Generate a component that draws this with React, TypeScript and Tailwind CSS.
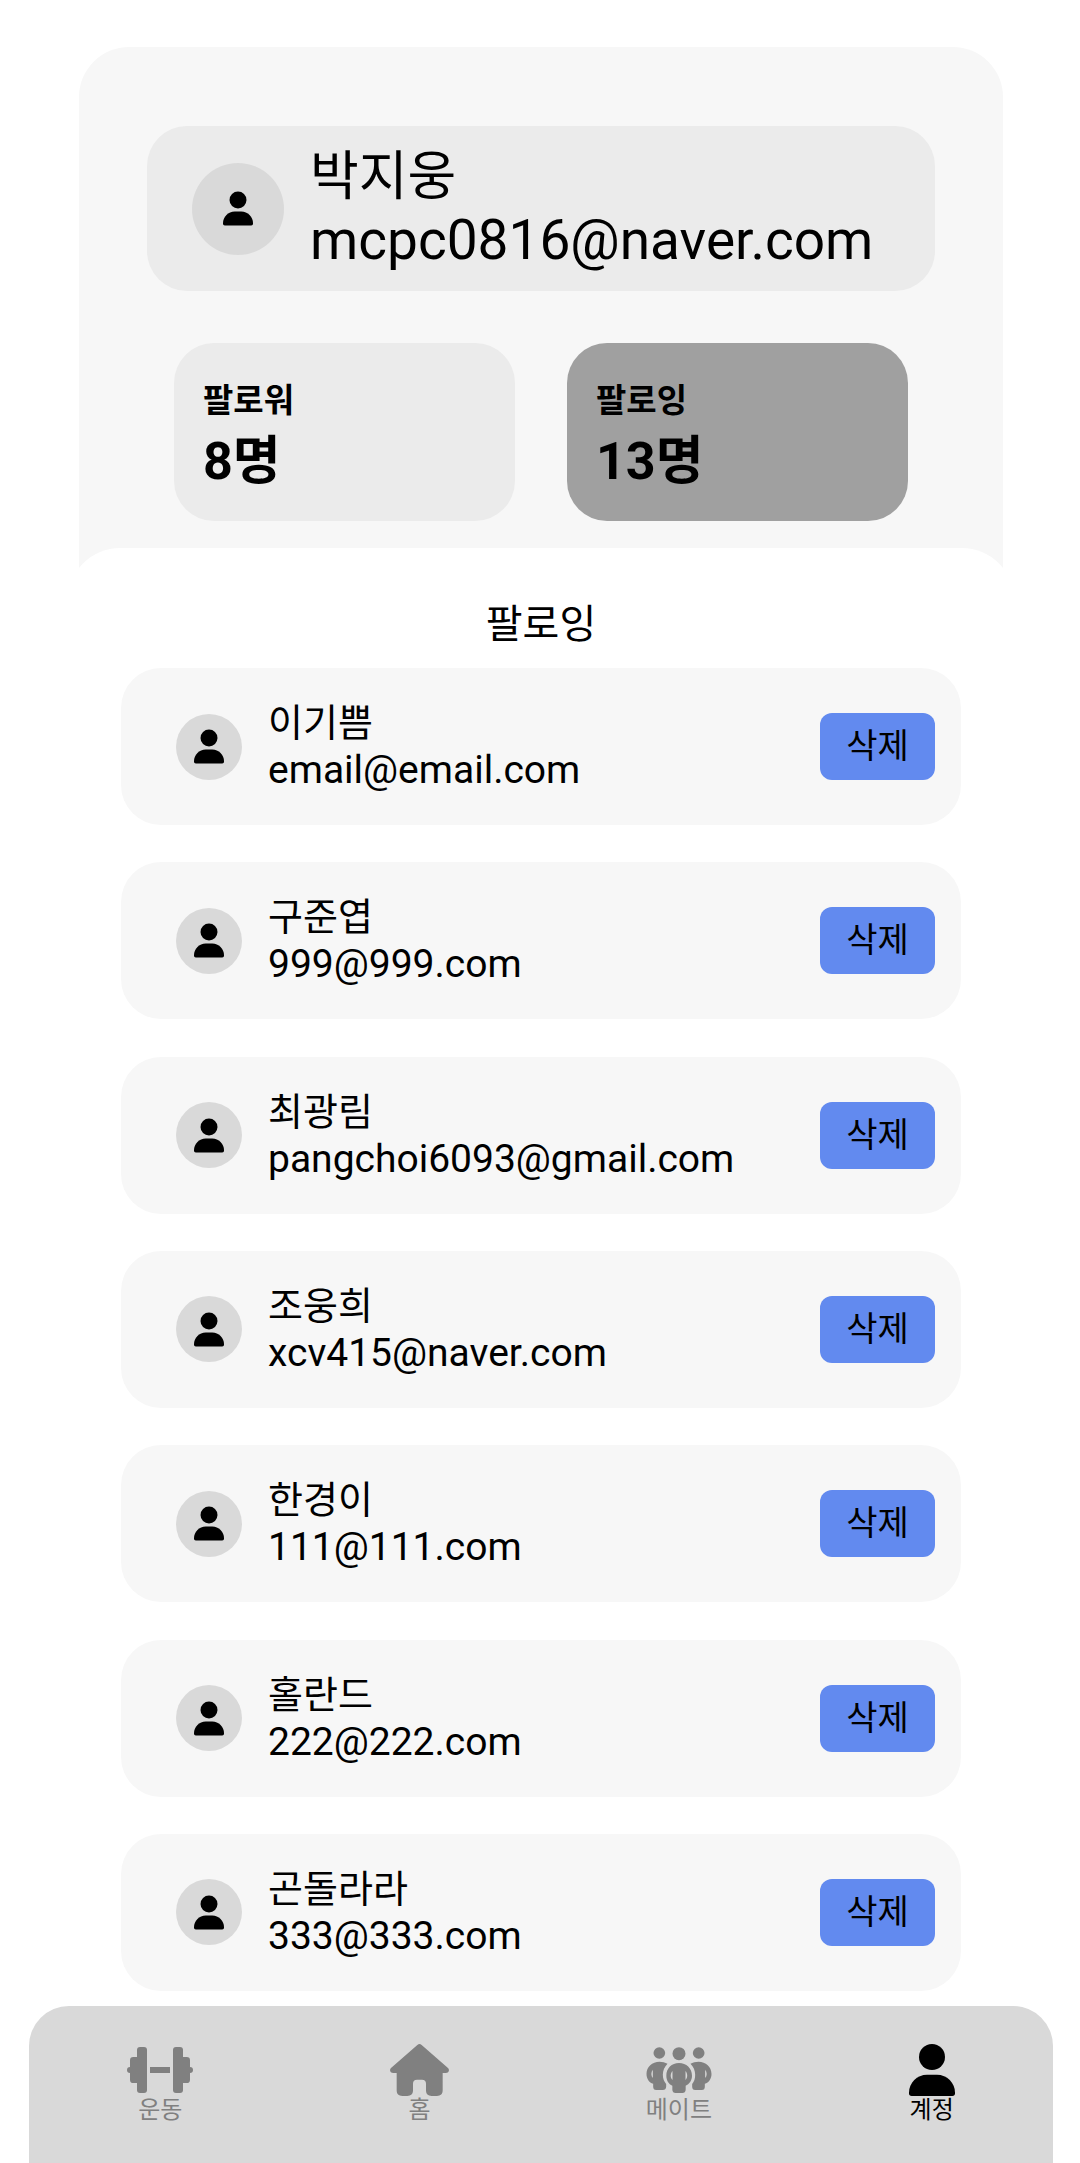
import type { ReactNode } from "react";

type Member = { name: string; email: string };

const me: Member = { name: "박지웅", email: "mcpc0816@naver.com" };

const following: Member[] = [
  { name: "이기쁨", email: "email@email.com" },
  { name: "구준엽", email: "999@999.com" },
  { name: "최광림", email: "pangchoi6093@gmail.com" },
  { name: "조웅희", email: "xcv415@naver.com" },
  { name: "한경이", email: "111@111.com" },
  { name: "홀란드", email: "222@222.com" },
  { name: "곤돌라라", email: "333@333.com" },
];

function PersonIcon({ className }: { className: string }) {
  return (
    <svg viewBox="0 0 138 156" className={className} fill="currentColor" aria-hidden="true">
      <circle cx="69" cy="39" r="39" />
      <path d="M54 92h30c30 0 54 24 54 54v2a8 8 0 0 1-8 8H8a8 8 0 0 1-8-8v-2c0-30 24-54 54-54Z" />
    </svg>
  );
}

function DumbbellIcon() {
  return (
    <svg viewBox="0 0 198 138" className="h-[46px] w-[66px]" fill="currentColor" aria-hidden="true">
      <rect x="30" y="0" width="30" height="138" rx="9" />
      <rect x="138" y="0" width="30" height="138" rx="9" />
      <path d="M36 30H19a10 10 0 0 0-10 10v20a9 9 0 0 0 0 18v20a10 10 0 0 0 10 10h17Z" />
      <path d="M162 30h17a10 10 0 0 1 10 10v20a9 9 0 0 1 0 18v20a10 10 0 0 1-10 10h-17Z" />
      <rect x="69" y="60" width="60" height="18" />
    </svg>
  );
}

function HomeIcon() {
  return (
    <svg viewBox="0 0 177 156" className="h-[52px] w-[59px]" fill="currentColor" aria-hidden="true">
      <path d="M82 3a10 10 0 0 1 13 0l79 69c6 6 2 15-7 15h-9v52c0 11-6 17-17 17h-16c-11 0-17-6-17-17v-20c0-8-4-12-12-12H81c-8 0-12 4-12 12v20c0 11-6 17-17 17H37c-11 0-17-6-17-17V87h-10c-9 0-13-9-7-15Z" />
    </svg>
  );
}

function PeopleIcon() {
  return (
    <svg viewBox="0 0 195 138" className="h-[46px] w-[66px]" fill="currentColor" aria-hidden="true">
      <circle cx="38.500" cy="18" r="17.500" />
      <circle cx="156.500" cy="18" r="17.500" />
      <circle cx="97.500" cy="20" r="19.500" />
      <path
        fillRule="evenodd"
        d="M39 44c9 0 17 2 24 6-9 9-14 20-14 33 0 12 4 20 10 28v8c0 6-4 10-10 10H29c-6 0-9-4-9-10v-9C8 107 0 95 0 81 0 59 17 44 39 44ZM19 68c-6 7-6 18 0 25Z"
      />
      <path
        fillRule="evenodd"
        d="M156 44c-9 0-17 2-24 6 9 9 14 20 14 33 0 12-3 20-9 28v8c0 6 3 10 9 10h20c6 0 9-4 9-10v-9c12-3 20-15 20-29 0-22-17-37-39-37Zm20 24c6 7 6 18 0 25Z"
      />
      <path
        fillRule="evenodd"
        d="M97.500 48c22 0 39 16 39 38 0 14-8 25-19 30v12c0 6-4 10-10 10h-20c-6 0-10-4-10-10v-12c-11-5-18-16-18-30 0-22 16-38 38-38ZM78 72c-7 8-7 20 0 27Zm39 0v27c7-7 7-19 0-27Z"
      />
    </svg>
  );
}

function StatCard({ label, value, selected }: { label: string; value: string; selected?: boolean }) {
  return (
    <button
      type="button"
      aria-pressed={!!selected}
      className={`flex flex-1 flex-col items-start rounded-[40px] px-[29px] pt-8 pb-[24px] text-left font-bold ${
        selected ? "bg-[#a0a0a0]" : "bg-[#ebebeb]"
      }`}
    >
      <span className="text-[33px] leading-[52px]">{label}</span>
      <span className="text-[52px] leading-[70px]">{value}</span>
    </button>
  );
}

function MemberRow({ name, email }: Member) {
  return (
    <li className="flex items-center rounded-[40px] bg-[#f7f7f7] py-[31px] pr-[26px] pl-[55px]">
      <span className="flex size-[66px] shrink-0 items-center justify-center rounded-full bg-[#d9d9d9]">
        <PersonIcon className="h-[35px] w-[30px]" />
      </span>
      <div className="ml-[26px] flex min-w-0 flex-1 flex-col">
        <span className="text-[38px] leading-[48px]">{name}</span>
        <span className="text-[39px] leading-[47px]">{email}</span>
      </div>
      <button
        type="button"
        aria-label={`${name} 삭제`}
        className="h-[67px] w-[115px] shrink-0 rounded-xl bg-[#628aef] text-[34px] leading-[67px]"
      >
        삭제
      </button>
    </li>
  );
}

function NavItem({ label, active, children }: { label: string; active?: boolean; children: ReactNode }) {
  return (
    <a
      href="#"
      aria-current={active ? "page" : undefined}
      className={`flex flex-col items-center ${active ? "text-black" : "text-[#808080]"}`}
    >
      <span className="flex h-[52px] items-center">{children}</span>
      <span className="text-[24px] leading-[28px]">{label}</span>
    </a>
  );
}

export default function App() {
  return (
    <div className="flex min-h-screen flex-col bg-white pt-[47px] font-['Roboto','Noto_Sans_CJK_KR',sans-serif] text-black">
      <header className="mr-[77px] ml-[79px] rounded-t-[50px] bg-[#f7f7f7] px-[68px] pt-[79px] pb-[77px]">
        <section className="flex items-center rounded-[40px] bg-[#ebebeb] py-[20px] pl-[45px]">
          <span className="flex size-[92px] shrink-0 items-center justify-center rounded-full bg-[#d9d9d9]">
            <PersonIcon className="h-[35px] w-[30px]" />
          </span>
          <div className="ml-[26px] flex flex-col">
            <h1 className="text-[53px] leading-[63px]">{me.name}</h1>
            <p className="text-[55px] leading-[62px]">{me.email}</p>
          </div>
        </section>
        <div className="mx-[27px] mt-[52px] flex gap-[52px]">
          <StatCard label="팔로워" value="8명" />
          <StatCard label="팔로잉" value="13명" selected />
        </div>
      </header>

      <main className="mr-[66px] ml-[68px] -mt-[50px] flex flex-1 flex-col rounded-t-[52px] bg-white px-[53px] pt-[47px] pb-[15px]">
        <h2 className="text-center text-[40px] leading-[60px]">팔로잉</h2>
        <ul className="mt-[13px] flex flex-1 flex-col justify-between gap-9">
          {following.map((member) => (
            <MemberRow key={member.email} {...member} />
          ))}
        </ul>
      </main>

      <nav className="mr-[27px] ml-[29px] flex items-start justify-around rounded-t-[40px] bg-[#d9d9d9] pt-[38px] pb-[39px]">
        <NavItem label="운동">
          <DumbbellIcon />
        </NavItem>
        <NavItem label="홈">
          <HomeIcon />
        </NavItem>
        <NavItem label="메이트">
          <PeopleIcon />
        </NavItem>
        <NavItem label="계정" active>
          <PersonIcon className="h-[52px] w-[46px]" />
        </NavItem>
      </nav>
    </div>
  );
}
